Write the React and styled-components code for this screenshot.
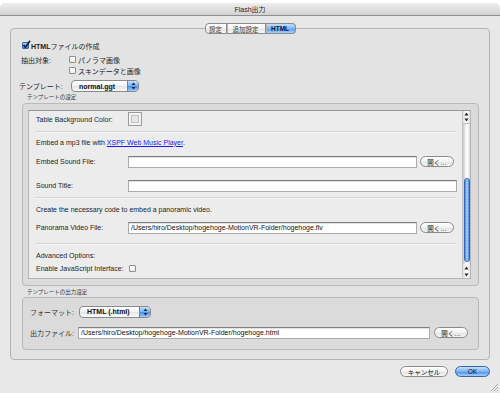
import React from "react";
import styled, { createGlobalStyle } from "styled-components";

const GlobalStyle = createGlobalStyle`
  html, body { margin: 0; padding: 0; background: #fff; }
  body {
    font-family: "Liberation Sans", "Noto Sans CJK JP", sans-serif;
    font-size: 7px;
    color: #1c1c1c;
  }
  * { box-sizing: border-box; }
`;

const Window = styled.div`
  width: 500px;
  height: 393px;
  padding-top: 3px;
  background: #fff;
  overflow: hidden;
  display: flex;
  flex-direction: column;
`;

const TitleBar = styled.div`
  height: 13px;
  flex: none;
  border-radius: 5px 5px 0 0;
  background: linear-gradient(#eeeeee, #d2d2d2);
  border-bottom: 1px solid #8e8e8e;
  display: flex;
  align-items: center;
  justify-content: center;
  font-size: 7px;
  color: #222;
  line-height: 1;
`;

const Body = styled.div`
  flex: 1;
  background: #e8e8e8;
  display: flex;
  flex-direction: column;
  position: relative;
`;

const TabRow = styled.div`
  margin-top: 7px;
  height: 11px;
  display: flex;
  justify-content: center;
  position: relative;
  z-index: 1;
`;

const Tab = styled.div`
  width: ${(p) => p.$w}px;
  height: 11px;
  display: flex;
  align-items: center;
  justify-content: center;
  font-size: 6.5px;
  font-weight: ${(p) => (p.$active ? "bold" : "normal")};
  color: ${(p) => (p.$active ? "#0c1b33" : "#333")};
  border: 1px solid #8a8a8a;
  border-left-width: ${(p) => (p.$first ? 1 : 0)}px;
  border-radius: ${(p) =>
    p.$first ? "4px 0 0 4px" : p.$last ? "0 4px 4px 0" : "0"};
  background: ${(p) =>
    p.$active
      ? "linear-gradient(#c6e0fb, #7db5f1 50%, #5b9ded 55%, #a8d0f8)"
      : "linear-gradient(#ffffff, #f1f1f1 50%, #e4e4e4 55%, #f7f7f7)"};
  box-shadow: ${(p) => (p.$first ? "none" : "inset 1px 0 0 #b5b5b5")};
`;

const Panel = styled.div`
  margin: -6px 10px 0 10px;
  border: 1px solid #b3b3b3;
  border-radius: 4px;
  background: #e3e3e3;
  padding: 11px 10px 9px 11px;
  display: flex;
  flex-direction: column;
`;

const CheckRow = styled.label`
  height: 11px;
  display: flex;
  align-items: center;
  gap: 2px;
`;

const Check = styled.span`
  width: 7px;
  height: 7px;
  flex: none;
  border: 1px solid ${(p) => (p.$on ? "#3b6aa8" : "#8d8d8d")};
  border-radius: 1px;
  background: ${(p) =>
    p.$on
      ? "linear-gradient(#b8d8fa, #5a9cec 55%, #3f86e2)"
      : "linear-gradient(#ffffff, #ececec)"};
  position: relative;
  margin-left: ${(p) => p.$ml || 0}px;
`;

const CheckMark = styled.svg`
  position: absolute;
  left: -1px;
  top: -3px;
  overflow: visible;
`;

const Strong = styled.b`
  font-weight: bold;
`;

const ExtractGrid = styled.div`
  margin-top: 3px;
  display: grid;
  grid-template-columns: 47px auto;
  grid-auto-rows: 11px;
  align-items: center;
`;

const FieldLabel = styled.span`
  margin-left: ${(p) => p.$ml || 0}px;
  width: ${(p) => (p.$w ? `${p.$w}px` : "auto")};
  flex: none;
  color: ${(p) => p.$color || "#1c1c1c"};
  white-space: nowrap;
`;

const TemplateRow = styled.div`
  margin-top: 4px;
  height: 12px;
  display: flex;
  align-items: center;
`;

const Popup = styled.div`
  width: ${(p) => p.$w}px;
  height: 12px;
  margin-left: ${(p) => p.$ml || 0}px;
  border: 1px solid #8a8a8a;
  border-radius: 4px;
  background: linear-gradient(#ffffff, #f3f3f3 50%, #e6e6e6 55%, #fafafa);
  display: flex;
  align-items: center;
  overflow: hidden;
  flex: none;
`;

const PopupText = styled.span`
  flex: 1;
  padding-left: 7px;
  font-weight: bold;
  font-size: 7px;
  color: #111;
`;

const PopupArrows = styled.div`
  width: 11px;
  height: 100%;
  border-left: 1px solid #5b85bd;
  background: linear-gradient(#c4e0fb, #79b2f0 50%, #4f94e9 55%, #9bcaf7);
  display: flex;
  align-items: center;
  justify-content: center;
`;

const GroupLabel = styled.div`
  margin-top: ${(p) => p.$mt}px;
  height: 7px;
  line-height: 7px;
  font-size: 5.5px;
  padding-left: 5px;
  color: #333;
`;

const GroupBox = styled.div`
  margin-top: ${(p) => p.$mt}px;
  border: 1px solid #b9b9b9;
  border-radius: 4px;
  background: #dbdbdb;
  padding: ${(p) => p.$pad};
  display: flex;
  flex-direction: column;
`;

const ScrollView = styled.div`
  height: 169px;
  border: 1px solid #b4b4b4;
  border-top-color: #979797;
  background: #ececec;
  display: flex;
`;

const ScrollContent = styled.div`
  flex: 1;
  padding: 0 5px 0 7px;
  display: flex;
  flex-direction: column;
`;

const Row = styled.div`
  margin-top: ${(p) => p.$mt || 0}px;
  height: ${(p) => p.$h}px;
  display: flex;
  align-items: center;
`;

const Separator = styled.div`
  margin-top: ${(p) => p.$mt}px;
  margin-right: 1px;
  height: 1px;
  flex: none;
  background: #d2d2d2;
  box-shadow: 0 1px 0 #f7f7f7;
`;

const ColorWell = styled.div`
  width: 14px;
  height: 14px;
  border: 1px solid #9c9c9c;
  background: #f2f2f2;
  padding: 2px;
  display: flex;
`;

const ColorSwatch = styled.div`
  flex: 1;
  border: 1px solid #c2c2c2;
  background: #e6e6e6;
`;

const Link = styled.a`
  color: #1a1aee;
  text-decoration: underline;
`;

const TextField = styled.div`
  height: ${(p) => p.$h || 12}px;
  flex: 1;
  background: #fff;
  border: 1px solid #ababab;
  border-top-color: #7d7d7d;
  box-shadow: inset 0 1px 0 #e2e2e2;
  display: flex;
  align-items: center;
  padding-left: 2px;
  font-size: 7px;
  color: #111;
  white-space: nowrap;
  overflow: hidden;
`;

const OpenButton = styled.div`
  width: 34px;
  height: 11px;
  flex: none;
  margin-left: ${(p) => p.$ml}px;
  margin-right: ${(p) => p.$mr || 0}px;
  border: 1px solid #8a8a8a;
  border-radius: 6px;
  background: linear-gradient(#ffffff, #f2f2f2 50%, #e2e2e2 55%, #f6f6f6);
  display: flex;
  align-items: center;
  justify-content: center;
  font-size: 6.5px;
  color: #222;
`;

const Scrollbar = styled.div`
  width: 8px;
  flex: none;
  display: flex;
  flex-direction: column;
  background: linear-gradient(90deg, #c9c9c9, #f4f4f4 40%, #ffffff 60%, #dadada);
  border-left: 1px solid #c4c4c4;
`;

const ArrowBtn = styled.div`
  height: ${(p) => p.$h}px;
  flex: none;
  display: flex;
  align-items: center;
  justify-content: center;
  background: linear-gradient(90deg, #e2e2e2, #ffffff 50%, #e6e6e6);
  border-bottom: ${(p) => (p.$sep ? "1px solid #bdbdbd" : "none")};
`;

const Track = styled.div`
  flex: 1;
  display: flex;
  flex-direction: column;
  justify-content: flex-end;
  padding-bottom: 2px;
`;

const Thumb = styled.div`
  height: 84px;
  margin: 0 0.5px;
  border-radius: 4px;
  border: 1px solid #2f65b5;
  background: repeating-linear-gradient(
      0deg,
      rgba(255, 255, 255, 0.12) 0 1px,
      rgba(255, 255, 255, 0) 1px 3px
    ),
    linear-gradient(90deg, #3b7fe0, #a7d0fa 45%, #8cc0f6 60%, #3d80df);
`;

const FormGrid = styled.div`
  display: grid;
  grid-template-columns: 48px 1fr;
  grid-template-rows: 13px 13px;
  row-gap: 8px;
  align-items: center;
`;

const FieldWithButton = styled.div`
  display: flex;
  align-items: center;
`;

const BottomBar = styled.div`
  margin-top: 6px;
  height: 11px;
  display: flex;
  justify-content: flex-end;
  gap: 7px;
  padding-right: 10px;
`;

const PushButton = styled.div`
  width: ${(p) => p.$w}px;
  height: 11px;
  border-radius: 6px;
  border: 1px solid ${(p) => (p.$default ? "#3565a8" : "#8a8a8a")};
  background: ${(p) =>
    p.$default
      ? "linear-gradient(#c4e0fb, #7ab3f0 50%, #4d93e9 55%, #a5d0f8)"
      : "linear-gradient(#ffffff, #f2f2f2 50%, #e2e2e2 55%, #f6f6f6)"};
  display: flex;
  align-items: center;
  justify-content: center;
  font-size: 6.5px;
  color: #111;
`;

const Grip = styled.svg`
  position: absolute;
  right: 1px;
  bottom: 1px;
`;

const UpDown = () => (
  <svg width="5" height="8" viewBox="0 0 5 8">
    <path d="M2.5 0.5 L4.5 3 L0.5 3 Z" fill="#102a52" />
    <path d="M2.5 7.5 L4.5 5 L0.5 5 Z" fill="#102a52" />
  </svg>
);

const Tri = ({ up }) => (
  <svg width="5" height="4" viewBox="0 0 5 4">
    {up ? (
      <path d="M2.5 0.5 L4.5 3.5 L0.5 3.5 Z" fill="#222" />
    ) : (
      <path d="M2.5 3.5 L4.5 0.5 L0.5 0.5 Z" fill="#222" />
    )}
  </svg>
);

const Checkbox = ({ on, ml }) => (
  <Check $on={on} $ml={ml}>
    {on && (
      <CheckMark width="9" height="9" viewBox="0 0 9 9">
        <path
          d="M1.5 5 L3.5 7.3 L8 0.8"
          stroke="#0d1e3a"
          strokeWidth="1.6"
          fill="none"
        />
      </CheckMark>
    )}
  </Check>
);

export default function App() {
  return (
    <>
      <GlobalStyle />
      <Window>
        <TitleBar>Flash出力</TitleBar>
        <Body>
          <TabRow>
            <Tab $w={22} $first>
              設定
            </Tab>
            <Tab $w={39}>追加設定</Tab>
            <Tab $w={30} $last $active>
              HTML
            </Tab>
          </TabRow>
          <Panel>
            <CheckRow>
              <Checkbox on />
              <span>
                <Strong>HTML</Strong>ファイルの作成
              </span>
            </CheckRow>
            <ExtractGrid>
              <FieldLabel $ml={-1}>抽出対象:</FieldLabel>
              <CheckRow>
                <Checkbox />
                <span>パノラマ画像</span>
              </CheckRow>
              <span />
              <CheckRow>
                <Checkbox />
                <span>スキンデータと画像</span>
              </CheckRow>
            </ExtractGrid>
            <TemplateRow>
              <FieldLabel $ml={-3} $w={52}>
                テンプレート:
              </FieldLabel>
              <Popup $w={68}>
                <PopupText>normal.ggt</PopupText>
                <PopupArrows>
                  <UpDown />
                </PopupArrows>
              </Popup>
            </TemplateRow>
            <GroupLabel $mt={2}>テンプレートの設定</GroupLabel>
            <GroupBox $mt={2} $pad="6px 7px 6px 5px">
              <ScrollView>
                <ScrollContent>
                  <Row $h={16}>
                    <FieldLabel $w={92}>Table Background Color:</FieldLabel>
                    <ColorWell>
                      <ColorSwatch />
                    </ColorWell>
                  </Row>
                  <Separator $mt={4} />
                  <Row $mt={5} $h={10}>
                    <span>
                      Embed a mp3 file with{" "}
                      <Link>XSPF Web Music Player</Link>.
                    </span>
                  </Row>
                  <Row $mt={8} $h={13}>
                    <FieldLabel $w={92}>Embed Sound File:</FieldLabel>
                    <TextField />
                    <OpenButton $ml={3} $mr={3}>
                      開く…
                    </OpenButton>
                  </Row>
                  <Row $mt={11} $h={13}>
                    <FieldLabel $w={92}>Sound Title:</FieldLabel>
                    <TextField />
                  </Row>
                  <Separator $mt={5} />
                  <Row $mt={6} $h={10}>
                    <span>
                      Create the necessary code to embed a panoramic video.
                    </span>
                  </Row>
                  <Row $mt={7} $h={13}>
                    <FieldLabel $w={92}>Panorama Video File:</FieldLabel>
                    <TextField>
                      /Users/hiro/Desktop/hogehoge-MotionVR-Folder/hogehoge.flv
                    </TextField>
                    <OpenButton $ml={3} $mr={3}>
                      開く…
                    </OpenButton>
                  </Row>
                  <Separator $mt={9} />
                  <Row $mt={6} $h={10}>
                    <span>Advanced Options:</span>
                  </Row>
                  <Row $mt={3} $h={10}>
                    <FieldLabel $w={93}>Enable JavaScript Interface:</FieldLabel>
                    <Checkbox />
                  </Row>
                </ScrollContent>
                <Scrollbar>
                  <ArrowBtn $h={6}>
                    <Tri up />
                  </ArrowBtn>
                  <ArrowBtn $h={7} $sep>
                    <Tri />
                  </ArrowBtn>
                  <Track>
                    <Thumb />
                  </Track>
                  <ArrowBtn $h={7}>
                    <Tri up />
                  </ArrowBtn>
                  <ArrowBtn $h={7}>
                    <Tri />
                  </ArrowBtn>
                </Scrollbar>
              </ScrollView>
            </GroupBox>
            <GroupLabel $mt={3}>テンプレートの出力設定</GroupLabel>
            <GroupBox $mt={1} $pad="7px 10px 10px 7px">
              <FormGrid>
                <FieldLabel $color="#333">フォーマット:</FieldLabel>
                <Popup $w={72} $ml={1}>
                  <PopupText>HTML (.html)</PopupText>
                  <PopupArrows>
                    <UpDown />
                  </PopupArrows>
                </Popup>
                <FieldLabel $color="#333">出力ファイル:</FieldLabel>
                <FieldWithButton>
                  <TextField $h={12}>
                    /Users/hiro/Desktop/hogehoge-MotionVR-Folder/hogehoge.html
                  </TextField>
                  <OpenButton $ml={4}>開く…</OpenButton>
                </FieldWithButton>
              </FormGrid>
            </GroupBox>
          </Panel>
          <BottomBar>
            <PushButton $w={48}>キャンセル</PushButton>
            <PushButton $w={35} $default>
              OK
            </PushButton>
          </BottomBar>
          <Grip width="9" height="9" viewBox="0 0 9 9">
            <path d="M1 8 L8 1 M4 8 L8 4 M7 8 L8 7" stroke="#9a9a9a" strokeWidth="0.8" />
          </Grip>
        </Body>
      </Window>
    </>
  );
}
